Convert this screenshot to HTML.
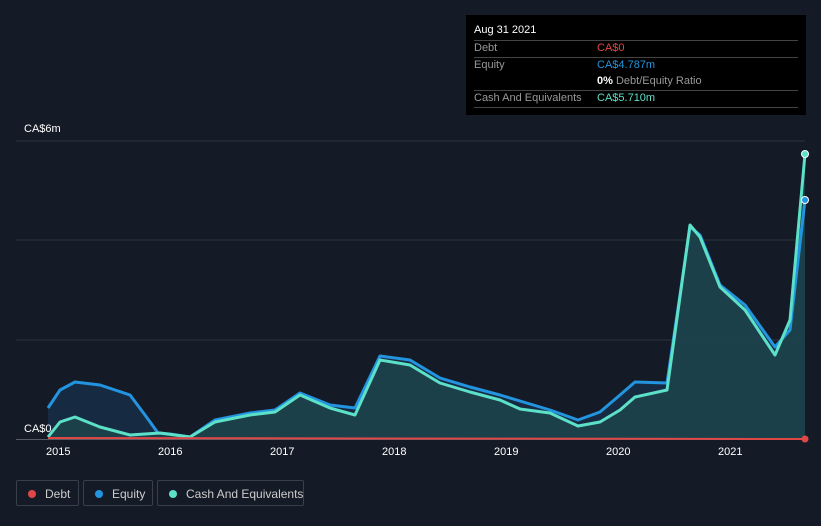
<!DOCTYPE html><html><head><style>
html,body{margin:0;overflow:hidden}
body{background:#151b26;width:821px;height:526px;font-family:"Liberation Sans",sans-serif;position:relative}
.tt{position:absolute;left:466px;top:15px;width:340px;height:100px;background:#000;color:#fff;font-size:11px}
.tt .r{position:absolute;left:8px;width:324px;border-top:1px solid #444}
.leg{position:absolute;top:480px;height:26px;border:1px solid #3a404b;border-radius:2px;color:#ccc;font-size:12px;line-height:26px;box-sizing:border-box;white-space:nowrap}
.leg i{position:absolute;left:11px;top:9px;width:8px;height:8px;border-radius:50%}
</style></head><body>
<svg width="821" height="526" style="position:absolute;left:0;top:0">
<g stroke="#2c323d" stroke-width="1"><line x1="16" y1="141" x2="805" y2="141"/><line x1="16" y1="240" x2="805" y2="240"/><line x1="16" y1="340" x2="805" y2="340"/></g>
<line x1="16" y1="439.5" x2="805" y2="439.5" stroke="#555a63"/>
<polygon fill="#17304a" fill-opacity="0.8" points="48,439 48,408 60,390 75,382 100,385 130,395 145,415 158,433 170,434 190,437 215,420 250,413 275,410 300,393 330,405 355,408 380,356 410,360 440,378 470,387 500,395 520,401 550,410 578,420 600,412 620,395 635,382 667,383 690,227 700,235 720,285 745,305 775,347 790,330 805,200 805,439"/>
<polygon fill="#1f4a4f" fill-opacity="0.7" points="48,439 48,437 60,422 75,417 100,427 130,435 160,433 190,437 215,422 250,415 275,412 300,395 330,408 355,415 380,360 410,365 440,383 470,392 500,400 520,409 550,413 578,426 600,422 620,410 635,397 667,390 690,225 700,237 720,287 745,310 775,355 790,320 805,154 805,439"/>
<polyline fill="none" stroke="#2394df" stroke-width="3" stroke-linejoin="round" points="48,408 60,390 75,382 100,385 130,395 145,415 158,433 170,434 190,437 215,420 250,413 275,410 300,393 330,405 355,408 380,356 410,360 440,378 470,387 500,395 520,401 550,410 578,420 600,412 620,395 635,382 667,383 690,227 700,235 720,285 745,305 775,347 790,330 805,200"/>
<polyline fill="none" stroke="#5de0c8" stroke-width="3" stroke-linejoin="round" points="48,437 60,422 75,417 100,427 130,435 160,433 190,437 215,422 250,415 275,412 300,395 330,408 355,415 380,360 410,365 440,383 470,392 500,400 520,409 550,413 578,426 600,422 620,410 635,397 667,390 690,225 700,237 720,287 745,310 775,355 790,320 805,154"/>
<line x1="48" y1="438" x2="805" y2="439" stroke="#e04848" stroke-width="2"/>
<circle cx="805" cy="154" r="3.5" fill="#5de0c8" stroke="#fff" stroke-width="1"/>
<circle cx="805" cy="200" r="3.5" fill="#2394df" stroke="#fff" stroke-width="1"/>
<circle cx="805" cy="439" r="3.5" fill="#e04848"/>
<g fill="#fff" font-size="11" font-family="Liberation Sans"><text x="24" y="132">CA$6m</text><text x="24" y="432">CA$0</text>
<text x="46" y="455">2015</text><text x="158" y="455">2016</text><text x="270" y="455">2017</text><text x="382" y="455">2018</text><text x="494" y="455">2019</text><text x="606" y="455">2020</text><text x="718" y="455">2021</text></g>
</svg>
<div class="tt">
<div style="position:absolute;left:8px;top:9px">Aug 31 2021</div>
<div class="r" style="top:25px"></div><div style="position:absolute;left:8px;top:27px;color:#999">Debt</div><div style="position:absolute;left:131px;top:27px;color:#e84545">CA$0</div>
<div class="r" style="top:42px"></div><div style="position:absolute;left:8px;top:44px;color:#999">Equity</div><div style="position:absolute;left:131px;top:44px;color:#2394df">CA$4.787m</div>
<div style="position:absolute;left:131px;top:60px;color:#999"><b style="color:#fff">0%</b> Debt/Equity Ratio</div>
<div class="r" style="top:75px"></div><div style="position:absolute;left:8px;top:77px;color:#999">Cash And Equivalents</div><div style="position:absolute;left:131px;top:77px;color:#5de0c8">CA$5.710m</div>
<div class="r" style="top:92px"></div>
</div>
<div class="leg" style="left:16px;width:63px"><i style="background:#e04848"></i><span style="position:absolute;left:28px">Debt</span></div>
<div class="leg" style="left:83px;width:70px"><i style="background:#2394df"></i><span style="position:absolute;left:28px">Equity</span></div>
<div class="leg" style="left:157px;width:147px"><i style="background:#5de0c8"></i><span style="position:absolute;left:28px">Cash And Equivalents</span></div>
</body></html>
